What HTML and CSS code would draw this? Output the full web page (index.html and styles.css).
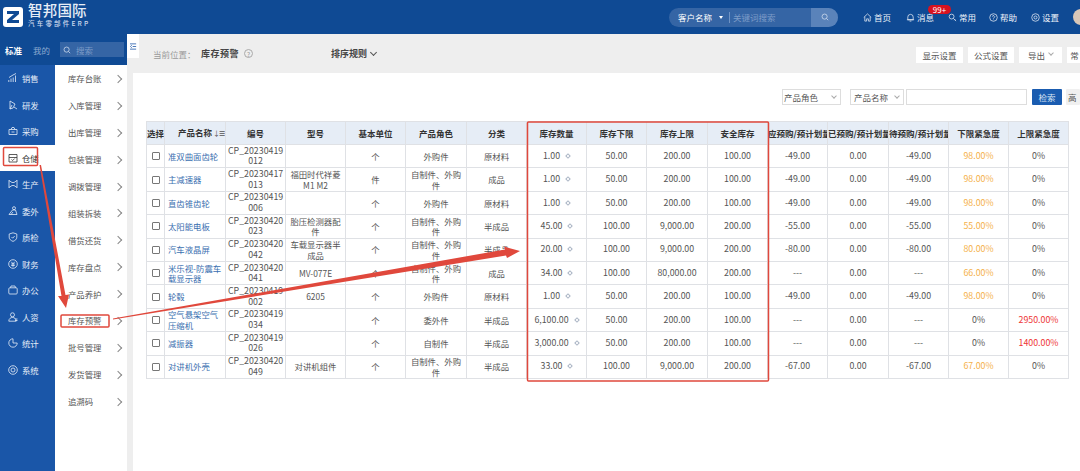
FILE: index.html
```html
<!DOCTYPE html>
<html lang="zh-CN">
<head>
<meta charset="utf-8">
<title>库存预警</title>
<link rel="stylesheet" href="styles.css">
</head>
<body>
<div class="app">
  <header class="topbar">
    <div class="logo">
      <svg class="logo-mark" viewBox="0 0 20 20"><rect width="20" height="20" rx="3" fill="#fff"/><path d="M4 4h12v3L9 13h7v3H4v-3l7-6H4z" fill="#0f4a94"/></svg>
      <div class="logo-text"><div class="logo-name">智邦国际</div><div class="logo-sub">汽车零部件ERP</div></div>
    </div>
    <div class="global-search">
      <span class="gs-type">客户名称</span><span class="gs-caret"></span><span class="gs-divider"></span><span class="gs-hint">关键词搜索</span>
      <span class="gs-btn"><svg viewBox="0 0 10 10" class="ico-s"><circle cx="4.5" cy="4.5" r="3.2"/><path d="M7 7l2 2"/></svg></span>
    </div>
    <nav class="top-nav">
      <a class="tn w29"><svg viewBox="0 0 10 10" class="ico-m"><path d="M.8 5L5 1l4.2 4M2 4.2V9h2V6.5h2V9h2V4.2"/></svg>首页</a>
      <a class="tn w42"><svg viewBox="0 0 10 10" class="ico-m"><path d="M2 7.5V4.5a3 3 0 016 0v3zM1 7.5h8M4 9h2"/></svg>消息<span class="badge">99+</span></a>
      <a class="tn w41"><svg viewBox="0 0 10 10" class="ico-m"><circle cx="4" cy="4" r="2.7"/><path d="M6 6l3 3M7 8l1-1"/></svg>常用</a>
      <a class="tn w42"><svg viewBox="0 0 10 10" class="ico-m"><circle cx="5" cy="5" r="4.2"/><path d="M3.8 4a1.2 1.2 0 112 1L5 5.8v.6M5 7.4v.5"/></svg>帮助</a>
      <a class="tn w42"><svg viewBox="0 0 10 10" class="ico-m"><circle cx="5" cy="5" r="4.2"/><circle cx="5" cy="5" r="1.7"/></svg>设置</a>
      <span class="avatar"></span>
    </nav>
  </header>

  <div class="body">
    <aside class="sidebar">
      <div class="side-head">
        <span class="side-tab active">标准</span><span class="side-tab">我的</span>
        <span class="side-search"><svg viewBox="0 0 10 10" class="ico-s"><circle cx="4.5" cy="4.5" r="3.2"/><path d="M7 7l2 2"/></svg>搜索</span>
      </div>
      <div class="side-cols">
        <ul class="rail">
          <li><svg viewBox="0 0 10 10" class="ico-r"><path d="M.8 9V7M3 9V5.5M5.2 9V4.5M7.5 9V2.5M1 4.5L5 2l3-1.5"/></svg>销售</li>
          <li><svg viewBox="0 0 10 10" class="ico-r"><path d="M2 1l5 3-2 4-3 1zM2 9l2-4M6 7l3 2"/></svg>研发</li>
          <li><svg viewBox="0 0 10 10" class="ico-r"><path d="M1 3.5h8v5H1zM3 3.5L4 1.5h2l1 2M3.5 6h3"/></svg>采购</li>
          <li class="on"><svg viewBox="0 0 10 10" class="ico-r"><path d="M1 1.5h8v7.5H1zM1 4.5h8M3.5 6.5l1.2 1 2-2"/></svg>仓储</li>
          <li><svg viewBox="0 0 10 10" class="ico-r"><path d="M1 1.5l3 2h2l3-2M1 8.5l3-2h2l3 2M1 1v8M9 1v8"/></svg>生产</li>
          <li><svg viewBox="0 0 10 10" class="ico-r"><circle cx="6" cy="2.2" r="1.5"/><path d="M4.5 4L1 8.5h8L7.5 4zM3 8.5l2-2.5"/></svg>委外</li>
          <li><svg viewBox="0 0 10 10" class="ico-r"><path d="M5 .8l3.8 1.2v3.2C8.8 7.400 7 8.600 5 9.400 3 8.600 1.200 7.400 1.200 5.200V2zM3.500 5l1.200 1.200 2-2.200"/></svg>质检</li>
          <li><svg viewBox="0 0 10 10" class="ico-r"><circle cx="5" cy="5" r="4.300"/><path d="M3.400 2.800L5 5l1.600-2.200M3.200 5h3.600M3.200 6.500h3.600M5 5v2.800"/></svg>财务</li>
          <li><svg viewBox="0 0 10 10" class="ico-r"><rect x=".8" y="2.800" width="8.400" height="6.200" rx="1"/><path d="M2.500 2.800L3 1h4l.5 1.800"/></svg>办公</li>
          <li><svg viewBox="0 0 10 10" class="ico-r"><circle cx="4.500" cy="2.800" r="2"/><path d="M.8 9.200c0-5 7.400-5 7.400 0zM7 7h2.500M7 8.500h2.500"/></svg>人资</li>
          <li><svg viewBox="0 0 10 10" class="ico-r"><path d="M5 .8A4.200 4.200 0 109.200 5H5z"/></svg>统计</li>
          <li><svg viewBox="0 0 10 10" class="ico-r"><circle cx="5" cy="5" r="4.300"/><circle cx="5" cy="5" r="2"/></svg>系统</li>
        </ul>
        <ul class="submenu">
          <li>库存台账</li><li>入库管理</li><li>出库管理</li><li>包装管理</li><li>调拨管理</li><li>组装拆装</li><li>借货还货</li><li>库存盘点</li><li>产品养护</li><li>库存预警</li><li>批号管理</li><li>发货管理</li><li>追溯码</li>
        </ul>
      </div>
    </aside>

    <div class="gutter"><span class="collapse"><svg viewBox="0 0 8 8"><path d="M0 1h7M3 4h4M0 7h7M2 2.500L.5 4 2 5.500"/></svg></span></div>

    <main class="main">
      <div class="toolbar">
        <div class="crumb"><span class="crumb-label">当前位置：</span><b>库存预警</b><span class="help">?</span></div>
        <div class="sort">排序规则<span class="chev"></span></div>
        <div class="tools">
          <span class="tool w47">显示设置</span><span class="tool w46">公式设置</span><span class="tool w43">导出<span class="chev small"></span></span><span class="tool w15">常</span>
        </div>
      </div>
      <section class="panel">
        <div class="filters">
          <span class="select w59">产品角色<span class="chev small"></span></span>
          <span class="select w54">产品名称<span class="chev small"></span></span>
          <span class="input"></span>
          <span class="btn primary">检索</span>
          <span class="btn">高</span>
        </div>
        <table class="grid">
          <colgroup>
            <col class="c18"><col class="c61"><col class="c60"><col class="c60"><col class="c60"><col class="c61"><col class="c60"><col class="c60"><col class="c60"><col class="c61"><col class="c60"><col class="c60"><col class="c61"><col class="c60"><col class="c60"><col class="c60">
          </colgroup>
          <thead>
            <tr><th>选择</th><th class="th-name">产品名称<span class="sorter">↓☰</span></th><th>编号</th><th>型号</th><th>基本单位</th><th>产品角色</th><th>分类</th><th>库存数量</th><th>库存下限</th><th>库存上限</th><th>安全库存</th><th>应预购/预计划量</th><th>已预购/预计划量</th><th>待预购/预计划量</th><th>下限紧急度</th><th>上限紧急度</th></tr>
          </thead>
          <tbody>
            <tr><td><i class="cb"></i></td><td class="name">准双曲面齿轮</td><td>CP_20230419 012</td><td></td><td>个</td><td>外购件</td><td>原材料</td><td>1.00<i class="mark"></i></td><td>50.00</td><td>200.00</td><td>100.00</td><td>-49.00</td><td>0.00</td><td>-49.00</td><td class="warn">98.00%</td><td>0%</td></tr>
            <tr><td><i class="cb"></i></td><td class="name">主减速器</td><td>CP_20230417 013</td><td>福田时代祥菱 M1 M2</td><td>件</td><td>自制件、外购件</td><td>成品</td><td>1.00<i class="mark"></i></td><td>50.00</td><td>200.00</td><td>100.00</td><td>-49.00</td><td>0.00</td><td>-49.00</td><td class="warn">98.00%</td><td>0%</td></tr>
            <tr><td><i class="cb"></i></td><td class="name">直齿锥齿轮</td><td>CP_20230419 006</td><td></td><td>个</td><td>外购件</td><td>原材料</td><td>1.00<i class="mark"></i></td><td>50.00</td><td>200.00</td><td>100.00</td><td>-49.00</td><td>0.00</td><td>-49.00</td><td class="warn">98.00%</td><td>0%</td></tr>
            <tr><td><i class="cb"></i></td><td class="name">太阳能电板</td><td>CP_20230420 023</td><td>胎压检测器配件</td><td>个</td><td>自制件、外购件</td><td>半成品</td><td>45.00<i class="mark"></i></td><td>100.00</td><td>9,000.00</td><td>200.00</td><td>-55.00</td><td>0.00</td><td>-55.00</td><td class="warn">55.00%</td><td>0%</td></tr>
            <tr><td><i class="cb"></i></td><td class="name">汽车液晶屏</td><td>CP_20230420 042</td><td>车载显示器半成品</td><td>个</td><td>自制件、外购件</td><td>半成品</td><td>20.00<i class="mark"></i></td><td>100.00</td><td>9,000.00</td><td>200.00</td><td>-80.00</td><td>0.00</td><td>-80.00</td><td class="warn">80.00%</td><td>0%</td></tr>
            <tr><td><i class="cb"></i></td><td class="name">米乐视-防震车载显示器</td><td>CP_20230420 041</td><td>MV-077E</td><td>个</td><td>自制件、外购件</td><td>成品</td><td>34.00<i class="mark"></i></td><td>100.00</td><td>80,000.00</td><td>200.00</td><td>---</td><td>0.00</td><td>---</td><td class="warn">66.00%</td><td>0%</td></tr>
            <tr><td><i class="cb"></i></td><td class="name">轮毂</td><td>CP_20230419 002</td><td>6205</td><td>个</td><td>外购件</td><td>原材料</td><td>1.00<i class="mark"></i></td><td>50.00</td><td>200.00</td><td>100.00</td><td>-49.00</td><td>0.00</td><td>-49.00</td><td class="warn">98.00%</td><td>0%</td></tr>
            <tr><td><i class="cb"></i></td><td class="name">空气悬架空气压缩机</td><td>CP_20230419 034</td><td></td><td>个</td><td>委外件</td><td>半成品</td><td>6,100.00<i class="mark"></i></td><td>50.00</td><td>200.00</td><td>100.00</td><td>---</td><td>0.00</td><td>---</td><td>0%</td><td class="alert">2950.00%</td></tr>
            <tr><td><i class="cb"></i></td><td class="name">减振器</td><td>CP_20230419 026</td><td></td><td>个</td><td>自制件</td><td>半成品</td><td>3,000.00<i class="mark"></i></td><td>50.00</td><td>200.00</td><td>100.00</td><td>---</td><td>0.00</td><td>---</td><td>0%</td><td class="alert">1400.00%</td></tr>
            <tr><td><i class="cb"></i></td><td class="name">对讲机外壳</td><td>CP_20230420 049</td><td>对讲机组件</td><td>个</td><td>自制件、外购件</td><td>半成品</td><td>33.00<i class="mark"></i></td><td>100.00</td><td>9,000.00</td><td>200.00</td><td>-67.00</td><td>0.00</td><td>-67.00</td><td class="warn">67.00%</td><td>0%</td></tr>
          </tbody>
        </table>
      </section>
    </main>
  </div>

  <svg class="annotations" viewBox="0 0 1080 471">
    <g fill="none" stroke="#e0483c" stroke-width="1.500">
      <rect x="3.500" y="147.500" width="34" height="18" rx="1"/>
      <rect x="61" y="315" width="48" height="12" rx="1"/>
      <rect x="527.500" y="122" width="241" height="259" rx="1"/>
    </g>
    <path fill="#e0483c" d="M39.500 165L41 165L65.500 295L69 294.500L66 308L58 296L61.500 296Z"/>
    <path fill="#e0483c" d="M113 318.500L505 249.500L504 246.500L520 251L507 258L506 255.500L113 319.500Z"/>
  </svg>
</div>
</body>
</html>
```

FILE: styles.css
```css
* { box-sizing: border-box; }
html, body { margin: 0; height: 100%; overflow: hidden; }
body { font-family: "Noto Sans CJK SC", "Noto Sans", sans-serif; font-size: 9.500px; color: #444; background: #eee; }
ul { list-style: none; margin: 0; padding: 0; }
svg { fill: none; stroke: currentColor; }
.app { position: relative; width: 1080px; height: 471px; display: flex; flex-direction: column; overflow: hidden; }

/* top bar */
.topbar { height: 34px; flex: none; background: #0f4a94; color: #fff; display: flex; align-items: center; padding-left: 3px; }
.logo { display: flex; align-items: center; gap: 5px; width: 666px; flex: none; }
.logo-mark { width: 20px; height: 20px; stroke: none; flex: none; }
.logo-text { display: flex; flex-direction: column; gap: 3px; padding-bottom: 4px; }
.logo-name { font-size: 14.500px; line-height: 14px; font-weight: 500; letter-spacing: .2px; color: #e6edf6; white-space: nowrap; }
.logo-sub { font-size: 6.500px; line-height: 7px; letter-spacing: 2.200px; font-weight: 500; white-space: nowrap; color: #cddaee; }
.global-search { width: 169px; height: 19px; border-radius: 10px; background: #3565a5; display: flex; align-items: center; padding-left: 9px; overflow: hidden; flex: none; }
.gs-type { font-size: 8.500px; color: #fff; width: 41px; }
.gs-caret { border: 2px solid transparent; border-top: 3px solid #fff; margin-top: 3px; }
.gs-divider { width: 1px; height: 11px; background: #6f93c4; margin-left: 6px; }
.gs-hint { color: #7d9cc8; font-size: 8.500px; margin-left: 3px; flex: 1; }
.gs-btn { width: 27px; height: 19px; background: #5a83ba; display: flex; align-items: center; justify-content: center; }
.ico-s { width: 8px; height: 8px; stroke-width: .9; color: #dbe5f2; }
.top-nav { display: flex; align-items: center; margin-left: 25px; }
.tn { position: relative; display: flex; align-items: center; gap: 2px; font-size: 8.500px; color: #eef3fa; flex: none; }
.w29 { width: 43px; }
.w42 { width: 42px; }
.w41 { width: 41px; }
.ico-m { width: 9px; height: 9px; stroke-width: .8; }
.badge { position: absolute; left: 22px; top: -6px; width: 23px; height: 9px; border-radius: 5px; background: #d8121f; color: #fff; font-size: 8px; line-height: 9px; text-align: center; }
.avatar { width: 16px; height: 16px; border-radius: 50%; background: #d9c7b8; flex: none; }

/* body */
.body { flex: 1; display: flex; min-height: 0; }
.sidebar { width: 127px; flex: none; background: #fff; display: flex; flex-direction: column; }
.side-head { height: 31px; flex: none; background: #0f4a94; display: flex; align-items: center; padding-left: 5px; color: #8eaad0; font-size: 8.500px; }
.side-tab { width: 28px; flex: none; }
.side-tab.active { color: #fff; font-weight: 700; }
.side-search { width: 64px; height: 15px; background: #3565a5; display: flex; align-items: center; gap: 5px; padding-left: 3px; color: #7d9cc8; margin-left: -1px; flex: none; }
.side-cols { flex: 1; display: flex; min-height: 0; }
.rail { width: 55px; background: #1a56a8; color: #e6eef8; flex: none; }
.rail li { height: 26.500px; display: flex; align-items: center; gap: 4px; padding-left: 8px; font-size: 8.400px; }
.rail li.on { background: #fff; color: #333; }
.ico-r { width: 10px; height: 10px; stroke-width: .8; flex: none; }
.submenu { flex: 1; background: #fff; }
.submenu li { height: 26.900px; display: flex; align-items: center; padding-left: 13px; position: relative; color: #555; font-size: 8.400px; }
.submenu li::after { content: ""; position: absolute; right: 6px; top: 11px; width: 5px; height: 5px; border-top: 1px solid #888; border-right: 1px solid #888; transform: rotate(45deg); }

.gutter { width: 6px; flex: none; position: relative; background: #eee; }
.collapse { position: absolute; left: 0; top: 0; width: 12px; height: 24px; background: #fff; color: #1a56a8; display: flex; align-items: center; padding-left: 3px; z-index: 1; }
.collapse svg { width: 7px; height: 7px; stroke-width: .9; }

.main { flex: 1; min-width: 0; display: flex; flex-direction: column; }
.toolbar { height: 39px; flex: none; display: flex; align-items: center; padding-left: 20px; }
.crumb { display: flex; align-items: center; width: 178px; flex: none; white-space: nowrap; }
.crumb-label { color: #999; width: 48px; font-size: 8.500px; flex: none; }
.crumb b { color: #444; font-size: 9px; letter-spacing: .5px; }
.help { width: 9px; height: 9px; margin-left: 5px; border: 1px solid #aaa; border-radius: 50%; color: #999; font-size: 6.500px; line-height: 8px; text-align: center; }
.sort { font-weight: 700; font-size: 9px; color: #444; display: flex; align-items: center; gap: 2px; width: 585px; flex: none; }
.chev { width: 5px; height: 5px; border-right: 1px solid #555; border-bottom: 1px solid #555; transform: rotate(45deg); margin-top: -3px; margin-left: 2px; display: inline-block; flex: none; }
.chev.small { width: 4px; height: 4px; border-color: #aaa; }
.tools { display: flex; gap: 5px; flex: none; margin-top: 2px; }
.tool { height: 16px; background: #fff; color: #555; font-size: 8.500px; display: flex; align-items: center; justify-content: center; gap: 2px; flex: none; white-space: nowrap; }
.w47 { width: 47px; } .w46 { width: 46px; } .w43 { width: 43px; } .w15 { width: 15px; }

.panel { flex: 1; background: #fff; min-height: 0; padding: 16px 0 0 13px; overflow: hidden; }
.filters { display: flex; align-items: center; height: 16px; margin-left: 636px; margin-bottom: 16px; width: 300px; }
.select { height: 16px; border: 1px solid #ddd; display: flex; align-items: center; justify-content: space-between; padding: 0 4px 0 1px; font-size: 8.500px; color: #555; flex: none; }
.w59 { width: 59px; margin-right: 9px; }
.w54 { width: 54px; margin-right: 2px; padding-left: 3px; }
.input { width: 121px; height: 16px; border: 1px solid #ddd; flex: none; }
.btn { width: 14px; height: 16px; margin-left: 4px; background: #f0f0f0; color: #555; font-size: 8.500px; display: flex; align-items: center; padding-left: 2px; border-radius: 1px; flex: none; }
.btn.primary { width: 30px; margin-left: 5px; background: #1a5cb0; color: #dbe6f5; justify-content: center; padding: 0; }

/* table */
.grid { border-collapse: collapse; table-layout: fixed; width: 922px; font-size: 8.400px; line-height: 10.600px; color: #555; }
.c18 { width: 18px; } .c61 { width: 61px; } .c60 { width: 60px; }
.grid th, .grid td { border: 1px solid #dfe1e5; padding: 0 2px; text-align: center; overflow: hidden; }
.grid th { height: 23px; background: #e6edf6; color: #333; font-weight: 700; font-size: 8.500px; padding: 0; white-space: nowrap; }
.grid .th-name { text-align: left; padding-left: 13px; }
.grid td { height: 23.400px; background: #fff; }
.grid td:nth-child(3), .grid td:nth-child(n+8) { font-size: 8.800px; }
.grid .name { color: #3b6fb0; text-align: left; padding: 0 2px 0 3px; }
.sorter { font-weight: 400; font-size: 7px; color: #555; margin-left: 1px; letter-spacing: -1px; }
.cb { display: block; width: 8px; height: 8px; margin: 0 auto; border: 1px solid #777; border-radius: 1px; background: #fff; }
.mark { display: inline-block; width: 4px; height: 4px; margin-left: 6px; border: 1px solid #a9b4c4; transform: rotate(45deg); vertical-align: 1px; }
.warn { color: #f5b14a; }
.alert { color: #ee3535; }

/* reviewer's markup over the screenshot */
.annotations { position: absolute; left: 0; top: 0; width: 1080px; height: 471px; pointer-events: none; stroke: none; }
```
